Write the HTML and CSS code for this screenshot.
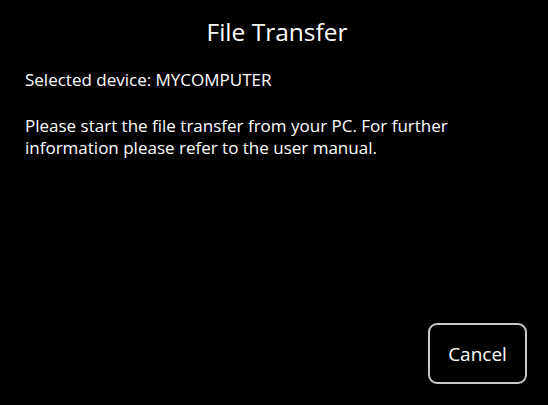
FILE: index.html
```html
<!DOCTYPE html>
<html>
<head>
<meta charset="utf-8">
<link rel="stylesheet" href="styles.css">
</head>
<body>
<div class="screen">
  <h1 class="title">File Transfer</h1>
  <p class="device">Selected device: MYCOMPUTER</p>
  <p class="info">Please start the file transfer from your PC. For further information please refer to the user manual.</p>
  <div class="actions">
    <button class="btn">Cancel</button>
  </div>
</div>
</body>
</html>
```
FILE: styles.css
```css
html, body {
  margin: 0;
  padding: 0;
  background: #000;
}
.screen {
  width: 548px;
  height: 405px;
  box-sizing: border-box;
  display: flex;
  flex-direction: column;
  color: #fff;
  font-family: "Open Sans", sans-serif;
  padding: 0 21px 21px 25px;
}
.title {
  margin: 15px 0 0 0;
  font-size: 24.5px;
  font-weight: 400;
  line-height: 34px;
  text-align: center;
  padding-left: 2px;
}
.device {
  margin: 20px 0 0 0;
  font-size: 17px;
  line-height: 22px;
}
.info {
  margin: 24px 0 0 0;
  font-size: 17px;
  line-height: 22px;
  width: 480px;
}
.actions {
  margin-top: auto;
  display: flex;
  justify-content: flex-end;
}
.btn {
  width: 99px;
  height: 61px;
  box-sizing: border-box;
  background: #000;
  color: #fff;
  border: 2px solid #c8c8c8;
  border-radius: 9px;
  font-family: "Open Sans", sans-serif;
  font-size: 19px;
  padding: 0;
}
```
